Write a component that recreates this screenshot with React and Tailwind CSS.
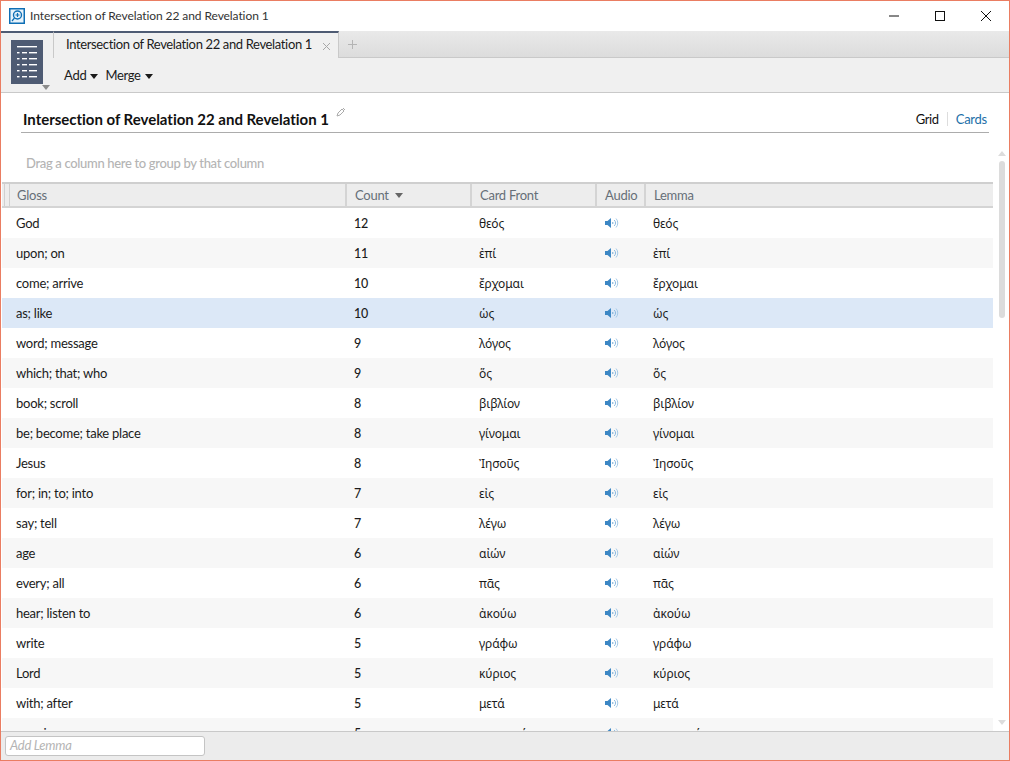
import React from "react";

const rows = [
  ["God", 12, "θεός"], ["upon; on", 11, "ἐπί"], ["come; arrive", 10, "ἔρχομαι"], ["as; like", 10, "ὡς"],
  ["word; message", 9, "λόγος"], ["which; that; who", 9, "ὅς"], ["book; scroll", 8, "βιβλίον"],
  ["be; become; take place", 8, "γίνομαι"], ["Jesus", 8, "Ἰησοῦς"], ["for; in; to; into", 7, "εἰς"],
  ["say; tell", 7, "λέγω"], ["age", 6, "αἰών"], ["every; all", 6, "πᾶς"], ["hear; listen to", 6, "ἀκούω"],
  ["write", 5, "γράφω"], ["Lord", 5, "κύριος"], ["with; after", 5, "μετά"], ["remain", 5, "μαρτυρέω"],
];

const font = "font-['Lato','Noto_Sans',sans-serif]";
const greek = "font-['Noto_Sans',sans-serif] text-[12px] tracking-[-0.1px]";

function Speaker() {
  return (
    <svg width="14" height="12" viewBox="0 0 14 12" className="block">
      <path d="M0 4h2.5L6 1v10L2.5 8H0z" fill="#3c87c4" />
      <path d="M7.6 5a1.6 1.6 0 0 1 0 2" fill="none" stroke="#6fa8d6" strokeWidth="1" />
      <path d="M9.2 3a4 4 0 0 1 0 6" fill="none" stroke="#8dbbe0" strokeWidth="1" />
      <path d="M11 1.5a6.6 6.6 0 0 1 0 9" fill="none" stroke="#a6cbe8" strokeWidth="1" />
    </svg>
  );
}

function ListIcon() {
  return (
    <svg width="32" height="44" viewBox="0 0 32 44" className="block bg-[#4e5b73]">
      <rect x="6" y="6" width="20" height="1.4" fill="#fff" />
      {[12, 18, 24, 30, 36].map((y) => (
        <g key={y} fill="#fff">
          <rect x="6" y={y} width="2.5" height="1.4" />
          <rect x="11" y={y} width="5" height="1.4" />
          <rect x="18" y={y} width="8" height="1.4" />
        </g>
      ))}
    </svg>
  );
}

function Caret({ className = "" }) {
  return <span className={`inline-block w-0 h-0 border-l-[4.5px] border-r-[4.5px] border-t-[5px] border-l-transparent border-r-transparent border-t-[#1a1a1a] ${className}`} />;
}

function Head({ w, pl = "pl-[8px]", children }) {
  return (
    <div className={`${w} ${pl} h-full flex items-center pt-[1px] border-r-2 border-[#d4d4d4] text-[#666f78] shrink-0`}>
      {children}
    </div>
  );
}

export default function App() {
  return (
    <div className={`w-[1010px] h-[761px] flex flex-col overflow-hidden bg-white border border-[#ea7d62] text-[13px] tracking-[-0.25px] text-[#1b1b1b] ${font}`}>
      <div className="h-[30px] shrink-0 flex items-center bg-white">
        <svg width="16" height="16" viewBox="0 0 16 16" className="ml-[8px]">
          <rect width="16" height="16" fill="#0f6fb5" />
          <rect x="1.5" y="1.5" width="13" height="13" fill="#e8f3fb" />
          <circle cx="8.5" cy="7" r="4" fill="none" stroke="#0f6fb5" strokeWidth="1.4" />
          <path d="M8.5 5v4M6.5 7h4M5.5 10l-2.5 3" stroke="#0f6fb5" strokeWidth="1.2" />
        </svg>
        <span className="ml-[5px] text-[12px] tracking-[-0.08px] text-[#333]">Intersection of Revelation 22 and Revelation 1</span>
        <div className="ml-auto flex items-center h-full">
          <svg width="46" height="30" viewBox="0 0 46 30"><path d="M18 15h10" stroke="#111" strokeWidth="1" /></svg>
          <svg width="46" height="30" viewBox="0 0 46 30"><rect x="18.5" y="10.5" width="9" height="9" fill="none" stroke="#111" strokeWidth="1" /></svg>
          <svg width="46" height="30" viewBox="0 0 46 30"><path d="M18 10l10 10M28 10l-10 10" stroke="#111" strokeWidth="1" /></svg>
        </div>
      </div>

      <div className="h-[62px] shrink-0 flex bg-[#f0f0f0] border-b border-[#c9c9c9] relative">
        <div className="w-[52px] shrink-0 border-t-2 border-[#4e5b73] relative bg-[#f0f0f0]">
          <div className="ml-[10px] mt-[7px]"><ListIcon /></div>
          <span className="absolute left-[41px] top-[52px] w-0 h-0 border-l-[4px] border-r-[4px] border-t-[5px] border-l-transparent border-r-transparent border-t-[#8b8b8b]" />
        </div>
        <div className="flex-1 flex flex-col min-w-0">
          <div className="h-[27px] flex bg-gradient-to-b from-[#e9e9e9] to-[#dcdcdc] border-b border-[#c9c9c9]">
            <div className="w-[286px] h-[27px] border-t-2 border-r border-l border-l-[#c9c9c9] border-r-[#c9c9c9] border-t-[#4e5b73] bg-[#f0f0f0] flex items-center pl-[12px] pb-[1px] text-[#1b1b1b]">
              <span className="whitespace-nowrap tracking-[-0.36px]">Intersection of Revelation 22 and Revelation 1</span>
              <svg width="9" height="9" viewBox="0 0 9 9" className="ml-auto mr-[7px] mt-[3px]"><path d="M1 1l7 7M8 1l-7 7" stroke="#a8a8a8" strokeWidth="1" /></svg>
            </div>
            <svg width="9" height="9" viewBox="0 0 9 9" className="ml-[9px] mt-[9px]"><path d="M4.5 0v9M0 4.5h9" stroke="#b4b4b4" strokeWidth="1" /></svg>
          </div>
          <div className="flex-1 flex items-center pl-[11px] gap-[8px] pt-[2px]">
            <span className="flex items-center gap-[4px]">Add <Caret /></span>
            <span className="flex items-center gap-[4px] -ml-[1px] tracking-[-0.35px]">Merge <Caret /></span>
          </div>
        </div>
      </div>

      <div className="flex-1 min-h-0 flex flex-col bg-white">
        <div className="h-[40px] shrink-0 mx-[20px] border-b border-[#acacac] flex items-end pb-[3px] pl-[2px]">
          <span className="text-[15px] font-bold text-[#111] leading-[20px] tracking-[-0.02px]">Intersection of Revelation 22 and Revelation 1</span>
          <svg width="10" height="10" viewBox="0 0 10 10" className="ml-[7px] mb-[12px]"><path d="M1 9l1-3 4-4 2 2-4 4zM7 1l2 2" fill="none" stroke="#aaa" strokeWidth="1" /></svg>
          <span className="ml-auto flex items-center pr-[2px]">
            <span className="text-[#111] tracking-[-0.4px]">Grid</span>
            <span className="w-px h-[14px] bg-[#ddd] mx-[8px]" />
            <span className="text-[#1d6fa8]">Cards</span>
          </span>
        </div>

        <div className="flex-1 min-h-0 flex">
          <div className="w-[992px] shrink-0 flex flex-col min-h-0">
            <div className="h-[49px] shrink-0 pl-[25px] pt-[21px] text-[#b4b4b4] font-medium leading-[18px] tracking-[-0.33px]">Drag a column here to group by that column</div>
            <div className="ml-[1px] h-[26px] shrink-0 flex bg-[#ededed] border-t-2 border-b-2 border-t-[#cfcfcf] border-b-[#d4d4d4]">
              <div className="w-[6px] h-full shrink-0 border-x border-[#d0d0d0] ml-[2px]" />
              <Head w="w-[337px]" pl="pl-[7px]">Gloss</Head>
              <Head w="w-[125px]"><span>Count</span><Caret className="ml-[6px] !border-t-[#666]" /></Head>
              <Head w="w-[125px]">Card Front</Head>
              <Head w="w-[49px]">Audio</Head>
              <div className="flex-1 h-full flex items-center pl-[8px] pt-[1px] text-[#666f78]">Lemma</div>
            </div>
            <div className="ml-[1px] flex-1 min-h-0 overflow-hidden">
              {rows.map(([g, c, l], i) => (
                <div key={i} className={`h-[30px] flex items-center pt-[2px] ${i === 3 ? "bg-[#dce8f7]" : i % 2 ? "bg-[#f7f7f7]" : "bg-white"}`}>
                  <div className="w-[345px] pl-[14px] shrink-0">{g}</div>
                  <div className="w-[125px] pl-[7px] shrink-0 text-[12.5px] font-medium">{c}</div>
                  <div className={`w-[125px] pl-[7px] shrink-0 ${greek}`}>{l}</div>
                  <div className="w-[49px] pl-[8px] shrink-0 -mt-[2px]"><Speaker /></div>
                  <div className={`flex-1 pl-[7px] ${greek}`}>{l}</div>
                </div>
              ))}
            </div>
          </div>
          <div className="flex-1 flex flex-col items-center pt-[18px] pb-[6px] pl-[2px]">
            <span className="w-0 h-0 border-l-[4px] border-r-[4px] border-b-[5px] border-l-transparent border-r-transparent border-b-[#dcdcdc]" />
            <div className="w-[6px] h-[157px] mt-[5px] rounded-[3px] bg-[#dcdcdc]" />
            <span className="mt-auto w-0 h-0 border-l-[4px] border-r-[4px] border-t-[5px] border-l-transparent border-r-transparent border-t-[#dcdcdc]" />
          </div>
        </div>
      </div>

      <div className="h-[29px] shrink-0 bg-[#ececec] border-t border-[#c9c9c9] flex items-center pl-[4px]">
        <div className="w-[200px] h-[20px] bg-white border border-[#c4c4c4] rounded-[3px] pl-[4px] flex items-center italic text-[#b4b4b4]">Add Lemma</div>
      </div>
    </div>
  );
}
